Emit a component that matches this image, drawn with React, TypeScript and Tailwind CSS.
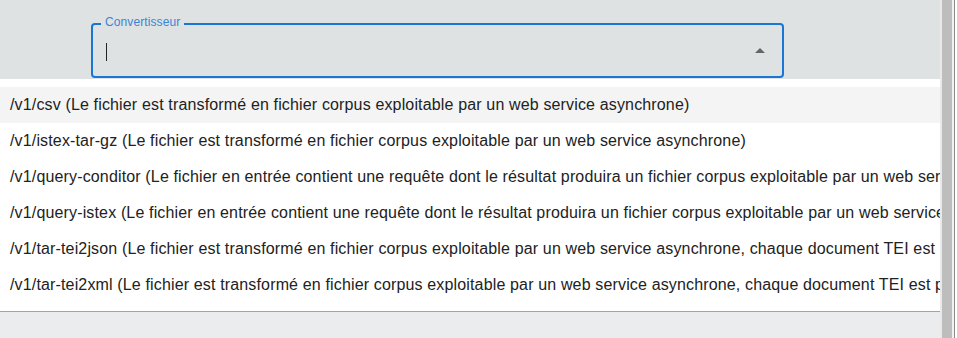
const options = [
  "/v1/csv (Le fichier est transformé en fichier corpus exploitable par un web service asynchrone)",
  "/v1/istex-tar-gz (Le fichier est transformé en fichier corpus exploitable par un web service asynchrone)",
  "/v1/query-conditor (Le fichier en entrée contient une requête dont le résultat produira un fichier corpus exploitable par un web service asynchrone)",
  "/v1/query-istex (Le fichier en entrée contient une requête dont le résultat produira un fichier corpus exploitable par un web service asynchrone)",
  "/v1/tar-tei2json (Le fichier est transformé en fichier corpus exploitable par un web service asynchrone, chaque document TEI est converti en JSON)",
  "/v1/tar-tei2xml (Le fichier est transformé en fichier corpus exploitable par un web service asynchrone, chaque document TEI est préservé en XML)",
];

export default function App() {
  return (
    <div
      className="flex h-[338px] w-[957px] overflow-hidden bg-white tracking-[0.15px]"
      style={{ fontFamily: '"Liberation Sans", Arial, sans-serif' }}
    >
      <div className="flex w-[940px] shrink-0 flex-col">
        {/* top form area */}
        <div className="h-[79px] shrink-0 bg-[#dfe2e3] pl-[91px] pt-[23px]">
          <div className="relative flex h-[55px] w-[693px] items-center rounded-[4px] border-2 border-[#1976d2] pl-[13px] pr-[14px]">
            <span className="absolute -top-[10px] left-[8px] bg-[#dfe2e3] px-[4px] text-[12px] leading-[15px] tracking-[0.1px] text-[#3a85d6]">
              Convertisseur
            </span>
            <span className="mt-[2px] h-[18px] w-px bg-[#222]" />
            <div className="flex-1" />
            <svg width="12" height="6" viewBox="0 0 12 6" className="mt-[-2px] mr-[2px]">
              <path d="M1 6 L6 1 L11 6 Z" fill="#666" />
            </svg>
          </div>
        </div>

        {/* menu */}
        <div className="shrink-0 bg-white py-[8px]">
          {options.map((o, i) => (
            <div
              key={o}
              className={`flex h-[36px] items-center overflow-hidden whitespace-nowrap px-[10px] text-[16px] text-[#222] ${
                i === 0 ? "bg-[#f4f4f4]" : ""
              }`}
            >
              {o}
            </div>
          ))}
        </div>
        <div className="h-px shrink-0 bg-[#a3a3a3]" />
        <div className="flex-1 bg-[#ebeced]" />
      </div>

      {/* scrollbar strip */}
      <div className="w-[2px] shrink-0 bg-[#e9e9e9]" />
      <div className="w-[10px] shrink-0 bg-[#bdbdbd]" />
      <div className="w-[2px] shrink-0 bg-[#f2f2f2]" />
      <div className="w-px shrink-0 bg-[#8a8a8a]" />
      <div className="flex-1 bg-white" />
    </div>
  );
}
